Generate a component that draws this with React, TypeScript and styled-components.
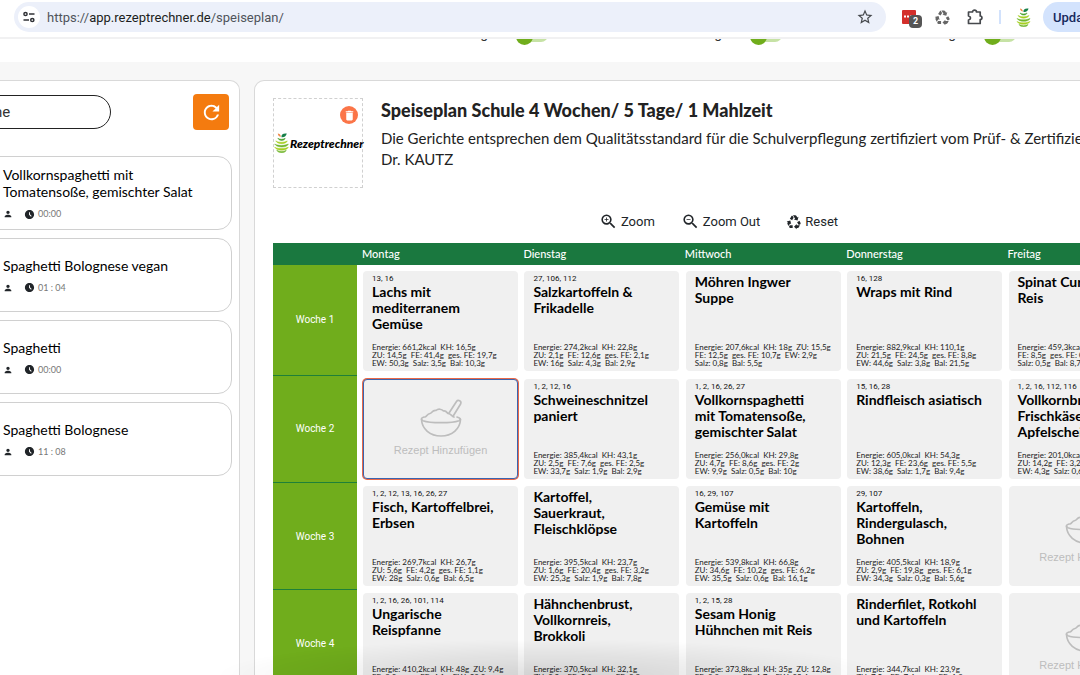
import React from 'react';
import styled, { createGlobalStyle, css } from 'styled-components';
import {
  MdAccessTimeFilled,
  MdDelete,
  MdOutlineStarBorder,
  MdPerson,
  MdRecycling,
  MdRefresh,
  MdZoomIn,
  MdZoomOut,
} from 'react-icons/md';

const lato = "Lato, 'Liberation Sans', sans-serif";
const roboto = "Roboto, 'Liberation Sans', sans-serif";

const GlobalStyle = createGlobalStyle`
  * { box-sizing: border-box; }
  body {
    margin: 0;
    background: #f7f7f7;
    font-family: ${lato};
    color: #212529;
    overflow: hidden;
  }
  h1, h2, h3, p, ul { margin: 0; padding: 0; }
  button, input { font: inherit; }
`;

const Page = styled.div`
  display: flex;
  flex-direction: column;
  height: 100vh;
  overflow: hidden;
`;

/* Browser bar */
const BrowserBar = styled.header`
  display: flex;
  align-items: flex-start;
  flex: none;
  height: 39px;
  padding: 2px 0 0 14px;
  background: #fff;
  border-bottom: 2px solid #f1f1f2;
  overflow: hidden;
`;

const AddressBar = styled.div`
  display: flex;
  align-items: center;
  flex: 1;
  height: 30px;
  padding: 0 12px 0 4px;
  border-radius: 15px;
  background: #ecf0fa;
`;

const SiteButton = styled.button`
  display: grid;
  place-items: center;
  width: 22px;
  height: 22px;
  padding: 0;
  border: 0;
  border-radius: 50%;
  background: #fff;
`;

const Url = styled.span`
  flex: 1;
  padding-left: 7px;
  font: 13px ${roboto};
  color: #50545a;
  b { font-weight: 400; color: #1c1e21; }
`;

const IconButton = styled.button`
  display: grid;
  place-items: center;
  padding: 0;
  border: 0;
  background: none;
  color: #46494d;
`;

const Extensions = styled.div`
  display: flex;
  align-items: center;
  flex: none;
  gap: 15px;
  height: 30px;
  padding-left: 15px;
`;

const RedExtension = styled(IconButton)`
  position: relative;
  width: 18px;
  height: 18px;
`;

const Count = styled.span`
  position: absolute;
  left: 8px;
  top: 7px;
  width: 13px;
  height: 13px;
  border-radius: 4px;
  background: #555;
  color: #fff;
  font: bold 9px/13px ${roboto};
  text-align: center;
`;

const Divider = styled.span`
  width: 2px;
  height: 14px;
  background: #d2e2fc;
`;

const UpdateClip = styled.div`
  flex: none;
  width: 37px;
  margin-left: 12px;
  overflow: hidden;
`;

const UpdateButton = styled.button`
  width: 90px;
  height: 30px;
  padding: 0 10px;
  border: 0;
  border-radius: 15px;
  background: #d3e3fd;
  color: #16295c;
  font: 500 13px ${roboto};
  text-align: left;
`;

/* Scrolled filter strip */
const FilterStrip = styled.div`
  display: flex;
  align-items: flex-end;
  flex: none;
  height: 23px;
  padding: 0 0 17px 465px;
  background: #fff;
  overflow: hidden;
`;

const FilterItem = styled.label`
  display: flex;
  align-items: flex-end;
  flex: none;
  width: 234px;
  height: 20px;
  font: 14px/20px ${roboto};
  color: #333;
`;

const FilterName = styled.span`
  width: 51px;
  height: 22px;
`;

const Toggle = styled.input`
  appearance: none;
  width: 32px;
  height: 14px;
  margin: 0 0 3px;
  border-radius: 7px;
  background: #c6e2a5;
  &::before {
    content: '';
    display: block;
    width: 17px;
    height: 17px;
    border-radius: 50%;
    background: #70ad1c;
  }
`;

const FilterNote = styled.span`
  height: 22px;
  padding-left: 26px;
  font-size: 12px;
`;

/* Body */
const Body = styled.main`
  display: flex;
  align-items: stretch;
  flex: 1;
  min-height: 0;
  gap: 14px;
  padding-top: 18px;
`;

const panel = css`
  flex: none;
  background: #fff;
  border: 1px solid #d9d9d9;
  border-bottom: 0;
`;

const SidebarWindow = styled.div`
  display: flex;
  justify-content: flex-end;
  flex: none;
  width: 240px;
  overflow: hidden;
`;

const Sidebar = styled.aside`
  ${panel}
  width: 312px;
  padding: 13px 7px 0 21px;
  border-radius: 10px 10px 0 0;
`;

const SearchRow = styled.form`
  display: flex;
  align-items: center;
  justify-content: space-between;
  height: 36px;
  margin-bottom: 26px;
  padding-right: 3px;
`;

const Search = styled.input`
  width: 161px;
  height: 34px;
  padding: 0 18px;
  border: 1px solid #222;
  border-radius: 17px;
  background: #fff;
  color: #333;
  font: 15px ${roboto};
  &::placeholder { color: #333; opacity: 1; }
`;

const RefreshButton = styled.button`
  display: grid;
  place-items: center;
  width: 36px;
  height: 36px;
  padding: 0;
  border: 0;
  border-radius: 4px;
  background: #f47b0f;
  color: #fff;
`;

const RecipeList = styled.ul`
  display: flex;
  flex-direction: column;
  gap: 8px;
  list-style: none;
`;

const Recipe = styled.li`
  display: flex;
  flex-direction: column;
  justify-content: center;
  gap: 8px;
  height: 74px;
  padding-left: 52px;
  border: 1px solid #d0d0d0;
  border-radius: 14px;
`;

const RecipeTitle = styled.h3`
  font: 400 14px/17px ${lato};
  color: #000;
  white-space: pre;
`;

const RecipeMeta = styled.p`
  display: flex;
  align-items: center;
  height: 12px;
  font: 9px/12px ${lato};
  color: #777;
  svg { color: #212529; }
  svg + svg { margin: 0 3px 0 11px; }
`;

/* Plan */
const Plan = styled.section`
  ${panel}
  width: 929px;
  padding: 17px 18px 0;
  border-radius: 10px 10px 0 0;
`;

const PlanHeader = styled.div`
  display: flex;
  gap: 18px;
`;

const LogoBox = styled.div`
  position: relative;
  display: flex;
  align-items: center;
  flex: none;
  width: 90px;
  height: 90px;
  border: 1px dashed #d0d0d0;
  svg { flex: none; }
`;

const LogoName = styled.span`
  padding-left: 1px;
  color: #000;
  font: italic 900 12px ${lato};
`;

const DeleteButton = styled.button`
  position: absolute;
  top: 7px;
  right: 4px;
  display: grid;
  place-items: center;
  width: 18px;
  height: 18px;
  padding: 0;
  border: 0;
  border-radius: 50%;
  background: #fb7548;
  color: #fff;
`;

const Title = styled.h1`
  font: 900 18px/24px ${lato};
  color: #222;
`;

const Description = styled.p`
  padding-top: 6px;
  font: 15px/21px ${lato};
  color: #222;
  white-space: pre;
`;

const ZoomBar = styled.div`
  display: flex;
  justify-content: center;
  gap: 26px;
  padding: 19px 0 7px;
`;

const ZoomButton = styled.button`
  display: flex;
  align-items: center;
  gap: 3px;
  height: 29px;
  padding: 0;
  border: 0;
  background: none;
  color: #212529;
  font: 13px ${roboto};
`;

const PlanTable = styled.table`
  width: 100%;
  height: 455px;
  table-layout: fixed;
  border-collapse: separate;
  border-spacing: 0;
`;

const DayHead = styled.th`
  height: 22px;
  padding: 0 0 0 5px;
  background: #1a783f;
  color: #fff;
  font: 500 11px/22px ${lato};
  text-align: left;
  &:first-child { width: 84px; }
`;

const WeekRow = styled.tr`
  &:first-child > td { padding-top: 6px; }
`;

const WeekHead = styled.th`
  padding: 0;
  background: #70ad1c;
  border-bottom: 1px solid #1f8038;
  color: #fff;
  font: 400 10px ${roboto};
`;

const DayCell = styled.td`
  height: 107px;
  padding: 3px 0 4px 6px;
  vertical-align: top;
`;

const Meal = styled.article`
  display: flex;
  flex-direction: column;
  height: 100px;
  padding: 3px 4px 4px 9px;
  border-radius: 4px;
  background: #f0f0f0;
  width: 155px;
`;

const Codes = styled.p`
  font: 8px/10px ${roboto};
  color: #111;
  white-space: pre;
`;

const MealTitle = styled.h2`
  font: 700 14px/16px ${lato};
  color: #000;
  white-space: pre;
`;

const Nutrition = styled.p`
  margin-top: auto;
  font: 8px/8px ${lato};
  color: #222;
  white-space: pre;
`;

const AddMeal = styled.button<{ $selected?: boolean }>`
  display: flex;
  flex-direction: column;
  align-items: center;
  justify-content: center;
  gap: 5px;
  width: 155px;
  height: 100px;
  padding: 0;
  border: 1px solid ${(p) => (p.$selected ? '#3c64ae' : '#f0f0f0')};
  border-radius: 4px;
  background: #f0f0f0;
  box-shadow: ${(p) => (p.$selected ? '0 0 0 1px #e8694a' : 'none')};
  color: #bdbdbd;
  font: 11px/16px 'Liberation Sans', sans-serif;
`;

const BottomShade = styled.div`
  position: fixed;
  left: 20%;
  right: 18%;
  bottom: 0;
  height: 36px;
  background: radial-gradient(ellipse 50% 100% at 50% 100%, rgba(0, 0, 0, 0.12), rgba(0, 0, 0, 0));
  pointer-events: none;
`;

const Pear = ({ width, height }: { width: number; height: number }) => (
  <svg width={width} height={height} viewBox="0 0 28 38" fill="none" aria-hidden="true">
    <path d="M14 8C13 3 17 0 24 1C23 6 19 9 14 8Z" fill="#16804a" />
    <path d="M7 1C10 1 12 3 13 7C9 7 7 4 7 1Z" fill="#ef8a4a" />
    <g strokeWidth="1" strokeLinejoin="round">
      <path d="M7 10C12 13 17 12 21 10C21 14 11 17 7 10Z" fill="#4da32f" stroke="#4da32f" />
      <path d="M3 15C10 19 19 18 25 15C23 21 8 23 3 15Z" fill="#a5cf1f" stroke="#a5cf1f" />
      <path d="M1 21C9 25 20 24 27 21C25 28 6 29 1 21Z" fill="#6fb52a" stroke="#6fb52a" />
      <path d="M1 27C9 31 20 30 27 27C24 34 6 35 1 27Z" fill="#a5cf1f" stroke="#a5cf1f" />
      <path d="M5 33C11 36 18 36 23 33C21 39 8 39 5 33Z" fill="#6fb52a" stroke="#6fb52a" />
    </g>
  </svg>
);

const Bowl = () => (
  <svg width="42" height="38" viewBox="0 0 42 38" fill="none" stroke="currentColor" strokeWidth="1.7" strokeLinecap="round" strokeLinejoin="round" aria-hidden="true">
    <path d="M4 18C1 19 0.600 20.500 3 21.700C10 24.300 32 24.300 39 21.700C41.400 20.500 40.500 19 37 18" />
    <path d="M1.500 20.500C2 30 10 37 21 37C32 37 40 30 40.500 20.500" />
    <path d="M5 18C7 17.500 7 15 10 14.500C12 14.300 12 11 16 11.500C18 9.500 22 10 23.500 12C26 11.500 27 13.500 28 14.500C31 14.500 31.500 17 34 18" />
    <path d="M29 14L36.500 2.500C38 0.400 42 2 40.600 5L33.500 16.500" />
  </svg>
);

const Puzzle = () => (
  <svg width="18" height="18" viewBox="0 0 18 18" fill="none" stroke="currentColor" strokeWidth="1.700" aria-hidden="true">
    <path d="M2.500 4H6.500C6.500 1.500 10.500 1.500 10.500 4H14.200V8C16.500 8 16.500 11.500 14.200 11.500V15.500H2.500V12C5.200 11.500 5.200 8.500 2.500 8Z" strokeLinejoin="round" />
  </svg>
);

const SiteControls = () => (
  <svg width="12" height="12" viewBox="0 0 12 12" fill="none" stroke="#303236" strokeWidth="1.500" aria-hidden="true">
    <circle cx="2.500" cy="3" r="1.600" />
    <path d="M6 3H11.500M0.500 9H6" />
    <circle cx="9.300" cy="9" r="1.600" />
  </svg>
);

type Dish = { codes?: string; title: string; facts: string };

const days = ['Montag', 'Dienstag', 'Mittwoch', 'Donnerstag', 'Freitag'];

const weeks: (Dish | null)[][] = [
  [
    { codes: '13, 16', title: 'Lachs mit\nmediterranem\nGemüse', facts: 'Energie: 661,2kcal  KH: 16,5g\nZU: 14,5g  FE: 41,4g  ges. FE: 19,7g\nEW: 50,3g  Salz: 3,5g  Bal: 10,3g' },
    { codes: '27, 106, 112', title: 'Salzkartoffeln &\nFrikadelle', facts: 'Energie: 274,2kcal  KH: 22,8g\nZU: 2,1g  FE: 12,6g  ges. FE: 2,1g\nEW: 16g  Salz: 4,3g  Bal: 2,9g' },
    { title: 'Möhren Ingwer\nSuppe', facts: 'Energie: 207,6kcal  KH: 18g  ZU: 15,5g\nFE: 12,5g  ges. FE: 10,7g  EW: 2,9g\nSalz: 0,8g  Bal: 5,5g' },
    { codes: '16, 128', title: 'Wraps mit Rind', facts: 'Energie: 882,9kcal  KH: 110,1g\nZU: 21,5g  FE: 24,5g  ges. FE: 8,8g\nEW: 44,6g  Salz: 3,8g  Bal: 21,5g' },
    { title: 'Spinat Curry mit\nReis', facts: 'Energie: 459,3kcal  KH: 71g\nFE: 8,5g  ges. FE: 0,9g  EW: 12g\nSalz: 0,5g  Bal: 8,7g' },
  ],
  [
    null,
    { codes: '1, 2, 12, 16', title: 'Schweineschnitzel\npaniert', facts: 'Energie: 385,4kcal  KH: 43,1g\nZU: 2,5g  FE: 7,6g  ges. FE: 2,5g\nEW: 33,7g  Salz: 1,9g  Bal: 2,9g' },
    { codes: '1, 2, 16, 26, 27', title: 'Vollkornspaghetti\nmit Tomatensoße,\ngemischter Salat', facts: 'Energie: 256,0kcal  KH: 29,8g\nZU: 4,7g  FE: 8,6g  ges. FE: 2g\nEW: 9,9g  Salz: 0,5g  Bal: 10g' },
    { codes: '15, 16, 28', title: 'Rindfleisch asiatisch', facts: 'Energie: 605,0kcal  KH: 54,3g\nZU: 12,3g  FE: 23,6g  ges. FE: 5,5g\nEW: 38,6g  Salz: 1,7g  Bal: 9,4g' },
    { codes: '1, 2, 16, 112, 116', title: 'Vollkornbrot,\nFrischkäse,\nApfelscheiben', facts: 'Energie: 201,0kcal  KH: 31g\nZU: 14,2g  FE: 3,2g  ges. FE: 1g\nEW: 4,3g  Salz: 0,6g  Bal: 4g' },
  ],
  [
    { codes: '1, 2, 12, 13, 16, 26, 27', title: 'Fisch, Kartoffelbrei,\nErbsen', facts: 'Energie: 269,7kcal  KH: 26,7g\nZU: 5,6g  FE: 4,2g  ges. FE: 1,1g\nEW: 28g  Salz: 0,6g  Bal: 6,5g' },
    { title: 'Kartoffel,\nSauerkraut,\nFleischklöpse', facts: 'Energie: 395,5kcal  KH: 23,7g\nZU: 1,6g  FE: 20,4g  ges. FE: 3,2g\nEW: 25,3g  Salz: 1,9g  Bal: 7,8g' },
    { codes: '16, 29, 107', title: 'Gemüse mit\nKartoffeln', facts: 'Energie: 539,8kcal  KH: 66,8g\nZU: 34,6g  FE: 10,2g  ges. FE: 6,2g\nEW: 35,5g  Salz: 0,6g  Bal: 16,1g' },
    { codes: '29, 107', title: 'Kartoffeln,\nRindergulasch,\nBohnen', facts: 'Energie: 405,5kcal  KH: 18,9g\nZU: 2,9g  FE: 19,8g  ges. FE: 6,1g\nEW: 34,3g  Salz: 0,3g  Bal: 5,6g' },
    null,
  ],
  [
    { codes: '1, 2, 16, 26, 101, 114', title: 'Ungarische\nReispfanne', facts: 'Energie: 410,2kcal  KH: 48g  ZU: 9,4g\nFE: 9,3g  ges. FE: 4,1g  EW: 28,3g\nSalz: 0,8g  Bal: 5,5g' },
    { title: 'Hähnchenbrust,\nVollkornreis,\nBrokkoli', facts: 'Energie: 370,5kcal  KH: 32,1g\nZU: 3,2g  FE: 5,8g  ges. FE: 0,9g\nEW: 45,1g  Salz: 0,4g  Bal: 5,8g' },
    { codes: '1, 2, 15, 28', title: 'Sesam Honig\nHühnchen mit Reis', facts: 'Energie: 373,8kcal  KH: 35g  ZU: 12,8g\nFE: 8,8g  ges. FE: 1,7g  EW: 32,4g\nSalz: 0,8g  Bal: 3,5g' },
    { title: 'Rinderfilet, Rotkohl\nund Kartoffeln', facts: 'Energie: 344,7kcal  KH: 23,9g\nZU: 7,5g  FE: 7,4g  ges. FE: 1,8g\nEW: 41,2g  Salz: 0,4g  Bal: 5,4g' },
    null,
  ],
];

const recipes = [
  { title: 'Vollkornspaghetti mit\nTomatensoße, gemischter Salat', time: '00:00' },
  { title: 'Spaghetti Bolognese vegan', time: '01 : 04' },
  { title: 'Spaghetti', time: '00:00' },
  { title: 'Spaghetti Bolognese', time: '11 : 08' },
];

export default function App() {
  return (
    <Page>
      <GlobalStyle />
      <BrowserBar>
        <AddressBar>
          <SiteButton aria-label="Website-Informationen"><SiteControls /></SiteButton>
          <Url>https://<b>app.rezeptrechner.de</b>/speiseplan/</Url>
          <IconButton aria-label="Lesezeichen"><MdOutlineStarBorder size={18} /></IconButton>
        </AddressBar>
        <Extensions>
          <RedExtension aria-label="Erweiterung">
            <svg width="16" height="16" viewBox="0 0 16 16" aria-hidden="true">
              <rect x="0" y="1" width="14" height="14" rx="1" fill="#d32f2b" />
              <path d="M2 7.500H12" stroke="#fff" strokeWidth="2" strokeDasharray="2 1" />
            </svg>
            <Count>2</Count>
          </RedExtension>
          <IconButton aria-label="Recycling"><MdRecycling size={17} color="#666" /></IconButton>
          <IconButton aria-label="Erweiterungen"><Puzzle /></IconButton>
          <Divider />
          <IconButton aria-label="Profil"><Pear width={15} height={19} /></IconButton>
        </Extensions>
        <UpdateClip><UpdateButton>Update</UpdateButton></UpdateClip>
      </BrowserBar>

      <FilterStrip>
        {[0, 1, 2].map((i) => (
          <FilterItem key={i}>
            <FilterName>Tag</FilterName>
            <Toggle type="checkbox" defaultChecked />
            <FilterNote>Vorschau</FilterNote>
          </FilterItem>
        ))}
      </FilterStrip>

      <Body>
        <SidebarWindow>
          <Sidebar>
            <SearchRow>
              <Search aria-label="Suche" placeholder="Suche" />
              <RefreshButton type="button" aria-label="Aktualisieren"><MdRefresh size={23} /></RefreshButton>
            </SearchRow>
            <RecipeList>
              {recipes.map((r) => (
                <Recipe key={r.title}>
                  <RecipeTitle>{r.title}</RecipeTitle>
                  <RecipeMeta>
                    <MdPerson size={10} />
                    <MdAccessTimeFilled size={11} />
                    {r.time}
                  </RecipeMeta>
                </Recipe>
              ))}
            </RecipeList>
          </Sidebar>
        </SidebarWindow>

        <Plan>
          <PlanHeader>
            <LogoBox>
              <Pear width={15} height={20} />
              <LogoName>Rezeptrechner</LogoName>
              <DeleteButton aria-label="Logo löschen"><MdDelete size={13} /></DeleteButton>
            </LogoBox>
            <div>
              <Title>Speiseplan Schule 4 Wochen/ 5 Tage/ 1 Mahlzeit</Title>
              <Description>{'Die Gerichte entsprechen dem Qualitätsstandard für die Schulverpflegung zertifiziert vom Prüf- & Zertifizierungsinstitut\nDr. KAUTZ'}</Description>
            </div>
          </PlanHeader>
          <ZoomBar>
            <ZoomButton><MdZoomIn size={19} />Zoom</ZoomButton>
            <ZoomButton><MdZoomOut size={19} />Zoom Out</ZoomButton>
            <ZoomButton><MdRecycling size={16} />Reset</ZoomButton>
          </ZoomBar>
          <PlanTable>
            <thead>
              <tr>
                <DayHead />
                {days.map((d) => <DayHead key={d} scope="col">{d}</DayHead>)}
              </tr>
            </thead>
            <tbody>
              {weeks.map((week, w) => (
                <WeekRow key={w}>
                  <WeekHead scope="row">Woche {w + 1}</WeekHead>
                  {week.map((dish, d) => (
                    <DayCell key={d}>
                      {dish ? (
                        <Meal>
                          {dish.codes && <Codes>{dish.codes}</Codes>}
                          <MealTitle>{dish.title}</MealTitle>
                          <Nutrition>{dish.facts}</Nutrition>
                        </Meal>
                      ) : (
                        <AddMeal $selected={w === 1}>
                          <Bowl />
                          Rezept Hinzufügen
                        </AddMeal>
                      )}
                    </DayCell>
                  ))}
                </WeekRow>
              ))}
            </tbody>
          </PlanTable>
        </Plan>
      </Body>
      <BottomShade />
    </Page>
  );
}
